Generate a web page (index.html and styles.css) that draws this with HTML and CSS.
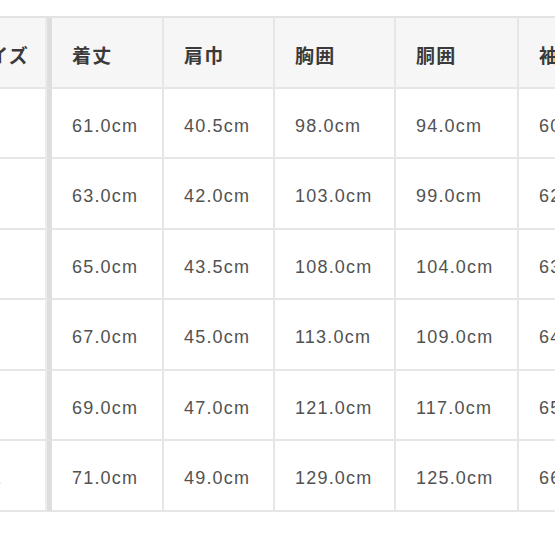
FILE: index.html
```html
<!DOCTYPE html>
<html lang="ja">
<head>
<meta charset="utf-8">
<link rel="stylesheet" href="styles.css">
</head>
<body>
<div class="wrap">
  <div class="table">
    <div class="cell head first">サイズ</div>
    <div class="cell head">着丈</div>
    <div class="cell head">肩巾</div>
    <div class="cell head">胸囲</div>
    <div class="cell head">胴囲</div>
    <div class="cell head">袖丈</div>

    <div class="cell first">XS</div>
    <div class="cell">61.0cm</div>
    <div class="cell">40.5cm</div>
    <div class="cell">98.0cm</div>
    <div class="cell">94.0cm</div>
    <div class="cell">60.0cm</div>

    <div class="cell first">S</div>
    <div class="cell">63.0cm</div>
    <div class="cell">42.0cm</div>
    <div class="cell">103.0cm</div>
    <div class="cell">99.0cm</div>
    <div class="cell">62.0cm</div>

    <div class="cell first">M</div>
    <div class="cell">65.0cm</div>
    <div class="cell">43.5cm</div>
    <div class="cell">108.0cm</div>
    <div class="cell">104.0cm</div>
    <div class="cell">63.0cm</div>

    <div class="cell first">L</div>
    <div class="cell">67.0cm</div>
    <div class="cell">45.0cm</div>
    <div class="cell">113.0cm</div>
    <div class="cell">109.0cm</div>
    <div class="cell">64.0cm</div>

    <div class="cell first">XL</div>
    <div class="cell">69.0cm</div>
    <div class="cell">47.0cm</div>
    <div class="cell">121.0cm</div>
    <div class="cell">117.0cm</div>
    <div class="cell">65.0cm</div>

    <div class="cell first">XXL</div>
    <div class="cell">71.0cm</div>
    <div class="cell">49.0cm</div>
    <div class="cell">129.0cm</div>
    <div class="cell">125.0cm</div>
    <div class="cell">66.0cm</div>
  </div>
</div>
</body>
</html>
```

FILE: styles.css
```css
html, body {
  margin: 0;
  padding: 0;
  background: #ffffff;
  overflow: hidden;
  width: 555px;
  height: 555px;
}

.wrap {
  padding-top: 16px;
  margin-left: -51px;
}

.table {
  display: grid;
  grid-template-columns: 103px 112px 111px 121px 123px 121px;
  grid-auto-rows: 70.5px;
  width: max-content;
  border-top: 2px solid #e3e3e3;
  font-family: "Liberation Sans", Arial, "Noto Sans CJK JP", sans-serif;
  font-size: 18px;
  letter-spacing: 1.2px;
  color: #525252;
}

.cell {
  box-sizing: border-box;
  display: flex;
  align-items: center;
  padding: 7px 0 0 20px;
  border-right: 2px solid #e6e6e6;
  border-bottom: 2px solid #e6e6e6;
  background: #ffffff;
  white-space: nowrap;
}

.cell.first {
  padding-left: 15px;
  border-right: 5px solid #dedede;
  box-shadow: inset -2px 0 0 #ececec;
}

.head {
  padding-top: 5px;
  background: #f6f6f6;
  font-family: "Noto Sans CJK JP", "Liberation Sans", sans-serif;
  font-size: 19px;
  font-weight: 700;
  color: #3a3a3a;
  letter-spacing: 1.2px;
}

.head.first {
  padding-left: 20px;
}
```
